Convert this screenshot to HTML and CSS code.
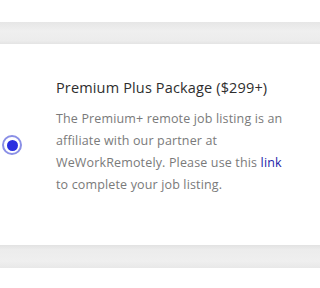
FILE: index.html
```html
<!DOCTYPE html>
<html>
<head>
<meta charset="utf-8">
<link rel="stylesheet" href="styles.css">
</head>
<body>
<div class="band band-top"></div>
<div class="card">
  <div class="radio-col">
    <span class="radio"><span class="dot"></span></span>
  </div>
  <div class="text">
    <h3 class="title">Premium Plus Package ($299+)</h3>
    <p class="desc">The Premium+ remote job listing is an affiliate with our partner at WeWorkRemotely. Please use this <a href="#" class="link">link</a> to complete your job listing.</p>
  </div>
</div>
<div class="band band-bottom"></div>
</body>
</html>
```
FILE: styles.css
```css
html {
  overflow: hidden;
}
html, body {
  margin: 0;
  padding: 0;
  background: #ffffff;
}
body {
  padding-top: 22px;
  font-family: "Open Sans", "Noto Sans", sans-serif;
}
.band {
  height: 22px;
  background: linear-gradient(#e6e6e6, #efefef 40%, #ececec 85%, #e4e4e4);
}
.band-bottom {
  background: linear-gradient(#e2e2e2, #ececec 20%, #efefef 70%, #e8e8e8);
  height: 23px;
}
.card {
  height: 201px;
  display: flex;
  box-sizing: border-box;
  padding-top: 34px;
  background: #fff;
}
.radio-col {
  width: 56px;
  flex: none;
  padding-left: 2px;
  box-sizing: border-box;
  padding-top: 57px;
}
.radio {
  display: flex;
  align-items: center;
  justify-content: center;
  width: 20px;
  height: 20px;
  box-sizing: border-box;
  border: 2px solid #8a8fe6;
  border-radius: 50%;
}
.dot {
  width: 11px;
  height: 11px;
  border-radius: 50%;
  background: #2a2fe0;
}
.text {
  width: 232px;
  flex: none;
}
.title {
  margin: 0;
  font-size: 14.5px;
  font-weight: 500;
  color: #2e2e2e;
  line-height: 20px;
  letter-spacing: 0.15px;
  white-space: nowrap;
}
.desc {
  margin: 10px 0 0;
  font-size: 12.5px;
  line-height: 22px;
  color: #7a7a7a;
  font-weight: 500;
  letter-spacing: 0.15px;
}
.link {
  color: #2323a8;
  text-decoration: none;
}
```
